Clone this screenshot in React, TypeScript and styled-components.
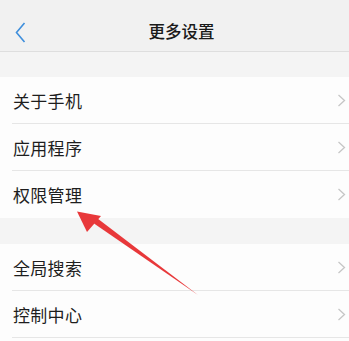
import styled, { createGlobalStyle } from "styled-components";

const Global = createGlobalStyle`
  html, body {
    margin: 0;
    padding: 0;
    background: #f4f4f4;
    font-family: "Noto Sans CJK SC", "Noto Sans", sans-serif;
  }
`;

const Page = styled.div`
  position: relative;
  width: 349px;
  height: 341px;
  overflow: hidden;
  background: #f4f4f4;
`;

const Header = styled.div`
  height: 52px;
  display: flex;
  align-items: flex-start;
  background: #f1f1f1;
  border-bottom: 1px solid #dedede;
  box-sizing: border-box;
  padding-left: 15px;
`;

const Back = styled.div`
  width: 14px;
  height: 22px;
  margin-top: 21px;
  display: flex;
  align-items: center;
`;

const Title = styled.div`
  flex: 1;
  text-align: center;
  padding-right: 15px;
  font-size: 16.5px;
  line-height: 22px;
  font-weight: 500;
  color: #1a1a1a;
  margin-top: 20px;
`;

const Gap = styled.div<{ h: number }>`
  height: ${(p) => p.h}px;
`;

const Group = styled.div`
  background: #fdfdfd;
`;

const Row = styled.div<{ last?: boolean }>`
  height: 46px;
  margin-left: 12px;
  padding-right: 3px;
  display: flex;
  align-items: center;
  justify-content: space-between;
  border-bottom: 1px solid ${(p) => (p.last ? "transparent" : "#e6e6e6")};
`;

const Label = styled.span`
  font-size: 17px;
  color: #1e1e1e;
  padding-left: 1px;
  letter-spacing: 0.3px;
`;

const Chevron = () => (
  <svg width="9" height="13" viewBox="0 0 9 13">
    <path d="M1.5 1 L7.5 6.5 L1.5 12" fill="none" stroke="#c6c6c6" strokeWidth="1.3" />
  </svg>
);

const Arrow = styled.svg`
  position: absolute;
  left: 0;
  top: 0;
  pointer-events: none;
`;

const Item = ({ text, last }: { text: string; last?: boolean }) => (
  <Row last={last}>
    <Label>{text}</Label>
    <Chevron />
  </Row>
);

export default function App() {
  return (
    <Page>
      <Global />
      <Header>
        <Back>
          <svg width="11" height="21" viewBox="0 0 11 21">
            <path d="M9.5 1 L1.5 10.5 L9.5 20" fill="none" stroke="#3f8fdc" strokeWidth="1.6" />
          </svg>
        </Back>
        <Title>更多设置</Title>
      </Header>
      <Gap h={25} />
      <Group>
        <Item text="关于手机" />
        <Item text="应用程序" />
        <Item text="权限管理" last />
      </Group>
      <Gap h={26} />
      <Group>
        <Item text="全局搜索" />
        <Item text="控制中心" />
        <Row last />
      </Group>
      <Arrow width="349" height="341" viewBox="0 0 349 341">
        <path d="M198 295 L94 223.5 L97.5 218.5 Z" fill="#e8383a" />
        <path d="M77 211.5 L101 216 L87 232 Z" fill="#e8383a" />
      </Arrow>
    </Page>
  );
}
